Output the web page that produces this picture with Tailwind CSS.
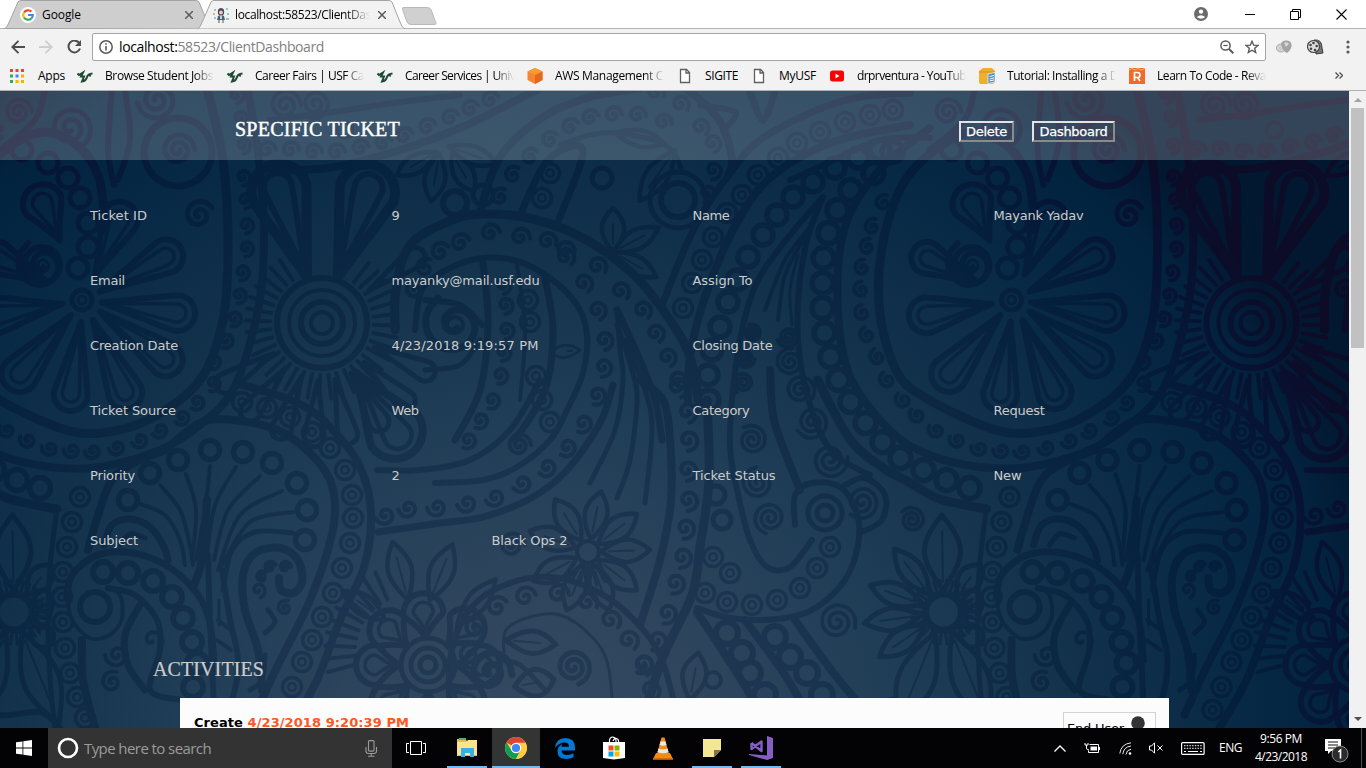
<!DOCTYPE html>
<html lang="en">
<head>
<meta charset="utf-8">
<title>Specific Ticket</title>
<script src="https://cdn.jsdelivr.net/npm/@tailwindcss/browser@4"></script>
</head>
<body class="w-[1366px] h-[768px] overflow-hidden flex flex-col bg-white font-['Open_Sans','Noto_Sans',sans-serif] text-[12px] text-black">

<!-- tab strip -->
<div class="relative h-[28px] shrink-0 flex items-center whitespace-nowrap">
  <svg class="absolute left-0 top-0" width="450" height="29" viewBox="0 0 450 29">
    <path d="M5 28.5C8 26 9 22 11 18L18 2Q19 .5 21 .5H195Q198 .5 199 2L206 19V29Z" fill="#cecece" stroke="#a3a3a3"/>
    <path d="M198 29C201 26 202 22 204 18L211 2Q212 .5 214 .5H388Q391 .5 392 2L400 22Q402 28 405 29Z" fill="#f2f2f2" stroke="#a3a3a3"/>
    <path d="M402.500 9.500Q401.500 7.500 404 7.500H427Q430 7.500 431 9.500L436 23.500Q436 24.500 434 24.500H411Q408 24.500 407 22Z" fill="#d0d0d0" stroke="#b9b9b9"/>
  </svg>
  <div class="relative flex items-center ml-[20px] w-[192px] h-full pt-[2px]">
    <svg width="16" height="16" viewBox="0 0 16 16"><circle cx="8" cy="8" r="8" fill="#fff"/><g fill="none" stroke-width="2.200"><path d="M4 5.500A4.800 4.800 0 0 1 11.400 4.600" stroke="#ea4335"/><path d="M4 5.500A4.800 4.800 0 0 0 4 10.500" stroke="#fbbc05"/><path d="M4 10.500A4.800 4.800 0 0 0 11.300 11.500" stroke="#34a853"/><path d="M8 8H12.800A4.800 4.800 0 0 1 11.300 11.500" stroke="#4285f4"/></g></svg>
    <div class="ml-[6px] w-[143px]"><span data-w="39">Google</span></div>
    <svg width="8" height="8" viewBox="0 0 8 8"><path d="M0 0L8 8M8 0L0 8" stroke="#5a5a5a" stroke-width="1.500"/></svg>
  </div>
  <div class="relative flex items-center w-[190px] h-full pt-[2px]">
    <svg width="18" height="16" viewBox="0 0 18 16"><path d="M6 7Q5 1 9 1Q13 1 12 7L11 8H7Z" fill="#434a5f"/><circle cx="9" cy="5.500" r="1.900" fill="#f0c9b0"/><path d="M6 9Q9 7 12 9L13 13H5Z" fill="#4e6275"/><path d="M8.300 8.500H9.700V12H8.300Z" fill="#fff"/><path d="M7 13V16M11 13V16" stroke="#555"/><g fill="#7fd0d0"><path d="M2 2H4V4H2ZM14 1H16V3H14ZM2 10H4V12H2ZM14 11H17V13H14ZM15 6H17V8H15Z"/></g><path d="M1 6H3V8H1Z" fill="#e7b66a"/></svg>
    <div class="ml-[5px] w-[135px] overflow-hidden [mask-image:linear-gradient(to_right,black_82%,transparent)]"><span data-w="136">localhost:58523/ClientDas</span></div>
    <svg class="ml-[8px]" width="8" height="8" viewBox="0 0 8 8"><path d="M0 0L8 8M8 0L0 8" stroke="#5a5a5a" stroke-width="1.500"/></svg>
  </div>
  <div class="relative ml-auto flex items-center h-full pr-[19px]">
    <svg width="14" height="14" viewBox="0 0 14 14"><circle cx="7" cy="7" r="7" fill="#6b6b6b"/><circle cx="7" cy="4.600" r="2.200" fill="#fff"/><path d="M2.800 10Q7 6.500 11.200 10Q7 13.500 2.800 10" fill="#fff"/></svg>
    <svg class="ml-[37px]" width="10" height="10" viewBox="0 0 10 10"><path d="M0 5.500H10" stroke="#000"/></svg>
    <svg class="ml-[35px]" width="11" height="11" viewBox="0 0 11 11" fill="none" stroke="#000"><path d="M.5 2.500H8.500V10.500H.5ZM2.500 2V.5H10.500V8.500H9"/></svg>
    <svg class="ml-[35px]" width="11" height="11" viewBox="0 0 11 11"><path d="M.5 .5L10.500 10.500M10.500 .5L.5 10.500" stroke="#000" stroke-width="1.100"/></svg>
  </div>
</div>

<!-- toolbar -->
<div class="h-[33px] shrink-0 bg-[#f2f2f2] border-t border-[#b2b2b2] flex items-center pt-[3px]">
  <svg class="ml-[11px]" width="14" height="14" viewBox="0 0 14 14" fill="none" stroke="#4d4d4d" stroke-width="1.900"><path d="M14 7H1.500M7.500 .8L1.300 7L7.500 13.200"/></svg>
  <svg class="ml-[14px]" width="14" height="14" viewBox="0 0 14 14" fill="none" stroke="#cfcfcf" stroke-width="1.900"><path d="M0 7H12.500M6.500 .8L12.700 7L6.500 13.200"/></svg>
  <svg class="ml-[14px]" width="15" height="14" viewBox="0 0 15 14" fill="none" stroke="#4d4d4d" stroke-width="2"><path d="M12.500 3.500A5.900 5.900 0 1 0 13 8.500"/><path d="M14 0V6H8Z" fill="#4d4d4d" stroke="none"/></svg>
  <div class="ml-[10px] w-[1174px] h-[28px] rounded-[2px] border border-[#a5a5a5] bg-white flex items-center text-[14px] whitespace-nowrap">
    <svg class="ml-[6px]" width="14" height="14" viewBox="0 0 14 14"><circle cx="7" cy="7" r="6.200" fill="none" stroke="#5a5a5a" stroke-width="1.500"/><path d="M7 6V10.500M7 3.200V4.800" stroke="#5a5a5a" stroke-width="1.600"/></svg>
    <span class="ml-[6px] text-[#808080]" data-w="205"><span class="text-black">localhost:</span>58523/ClientDashboard</span>
    <svg class="ml-auto" width="14" height="14" viewBox="0 0 14 14" fill="none" stroke="#5a5a5a"><circle cx="5.500" cy="5.500" r="4.600" stroke-width="1.500"/><path d="M9 9L13.300 13.300" stroke-width="2"/><path d="M3.300 5.500H7.700" stroke-width="1.200"/></svg>
    <svg class="ml-[11px] mr-[6px]" width="14" height="14" viewBox="0 0 14 14" fill="none" stroke="#5a5a5a" stroke-width="1.400"><path d="M7 1.300L8.700 5.200L13 5.500L9.700 8.300L10.700 12.500L7 10.200L3.300 12.500L4.300 8.300L1 5.500L5.300 5.200Z"/></svg>
  </div>
  <svg class="ml-[10px]" width="17" height="14" viewBox="0 0 17 14"><ellipse cx="5" cy="8" rx="4.700" ry="4" fill="#d0d0d0" stroke="#b0b0b0"/><path d="M5 4Q6 0 11 .5Q16 1 15.500 6Q15 10 11 13Q7 11 6 7Z" fill="#a3a3a3"/><path d="M8 3Q11 1 13 4L10 7Z" fill="#d8d8d8"/></svg>
  <svg class="ml-[14px]" width="17" height="16" viewBox="0 0 17 16"><path d="M7 1Q15 0 15 9L16 14L9 15Z" fill="#777" stroke="#3b3b3b"/><circle cx="6.500" cy="7.500" r="6" fill="#ddd" stroke="#444" stroke-width="1.200"/><g fill="#444"><circle cx="6.500" cy="4" r="1.300"/><circle cx="3.500" cy="6" r="1.300"/><circle cx="4" cy="9.800" r="1.300"/><circle cx="8" cy="11" r="1.300"/><circle cx="9.700" cy="7" r="1.300"/></g></svg>
  <svg class="ml-[22px]" width="4" height="14" viewBox="0 0 4 14" fill="#5a5a5a"><circle cx="2" cy="2" r="1.600"/><circle cx="2" cy="7" r="1.600"/><circle cx="2" cy="12" r="1.600"/></svg>
</div>

<!-- bookmarks -->
<div class="h-[30px] shrink-0 bg-[#f2f2f2] border-b border-[#b0b0b0] flex items-center whitespace-nowrap pl-[10px]">
  <div class="flex items-center w-[67px]">
    <svg width="14" height="14" viewBox="0 0 14 14"><path d="M0 0H3V3H0ZM5.500 0H8.500V3H5.500ZM11 0H14V3H11Z" fill="#ea4335"/><path d="M0 5.500H3V8.500H0ZM0 11H3V14H0Z" fill="#34a853"/><path d="M5.500 5.500H8.500V8.500H5.500Z" fill="#4285f4"/><path d="M11 5.500H14V8.500H11ZM5.500 11H8.500V14H5.500ZM11 11H14V14H11Z" fill="#fbaf05"/></svg>
    <span class="ml-[14px]" data-w="27">Apps</span>
  </div>
  <div class="flex items-center w-[150px]"><svg width="16" height="16" viewBox="0 0 16 16"><use href="#bull"/></svg><div class="ml-[12px] w-[109px] overflow-hidden [mask-image:linear-gradient(to_right,black_82%,transparent)]"><span data-w="108">Browse Student Jobs</span></div></div>
  <div class="flex items-center w-[150px]"><svg width="16" height="16" viewBox="0 0 16 16"><use href="#bull"/></svg><div class="ml-[12px] w-[109px] overflow-hidden [mask-image:linear-gradient(to_right,black_82%,transparent)]"><span data-w="109">Career Fairs | USF Ca</span></div></div>
  <div class="flex items-center w-[150px]"><svg width="16" height="16" viewBox="0 0 16 16"><use href="#bull"/></svg><div class="ml-[12px] w-[109px] overflow-hidden [mask-image:linear-gradient(to_right,black_82%,transparent)]"><span data-w="110">Career Services | Univ</span></div></div>
  <div class="flex items-center w-[150px]"><svg width="16" height="16" viewBox="0 0 16 16"><path d="M8 0L15.500 3.500V12L8 16L.5 12V3.500Z" fill="#f58536"/><path d="M8 0L15.500 3.500L8 7L.5 3.500Z" fill="#fb9a2d"/><path d="M8 7L15.500 3.500V12L8 16Z" fill="#e9651e"/></svg><div class="ml-[12px] w-[109px] overflow-hidden [mask-image:linear-gradient(to_right,black_82%,transparent)]"><span data-w="108">AWS Management C</span></div></div>
  <div class="flex items-center w-[74px]"><svg width="16" height="16" viewBox="0 0 16 16"><use href="#doc"/></svg><span class="ml-[12px]" data-w="33">SIGITE</span></div>
  <div class="flex items-center w-[78px]"><svg width="16" height="16" viewBox="0 0 16 16"><use href="#doc"/></svg><span class="ml-[12px]" data-w="37">MyUSF</span></div>
  <div class="flex items-center w-[150px]"><svg width="16" height="16" viewBox="0 0 16 16"><rect x="1" y="2.500" width="14" height="11" rx="2.500" fill="#f00"/><path d="M6.500 5.500L10.500 8L6.500 10.500Z" fill="#fff"/></svg><div class="ml-[12px] w-[109px] overflow-hidden [mask-image:linear-gradient(to_right,black_82%,transparent)]"><span data-w="109">drprventura - YouTub</span></div></div>
  <div class="flex items-center w-[150px]"><svg width="17" height="16" viewBox="0 0 17 16"><path d="M0 3L4 0H13L16 3V14L14 16H1L0 14Z" fill="#efae2f"/><path d="M0 4H16" stroke="#d18f1f"/><path d="M9 6L16 4.500V14L9 15.500Z" fill="#3d8fc6" stroke="#fff" stroke-width=".7"/><path d="M10.500 8.500L15 7.500M10.500 11L15 10M10.500 13L15 12" stroke="#fff"/></svg><div class="ml-[11px] w-[109px] overflow-hidden [mask-image:linear-gradient(to_right,black_82%,transparent)]"><span data-w="111">Tutorial: Installing a D</span></div></div>
  <div class="flex items-center w-[150px]"><svg width="16" height="16" viewBox="0 0 16 16"><path d="M0 0H16V16H0Z" fill="#f26a25"/><path d="M5.500 13V4.500H8.500Q11 4.500 11 7T8.500 9.500H5.500M8.500 9.500L11 13" fill="none" stroke="#fff" stroke-width="1.700"/><path d="M0 2L3 .5L6 2L9 .5L12 2L16 .5" fill="none" stroke="#f9b18d"/></svg><div class="ml-[12px] w-[109px] overflow-hidden [mask-image:linear-gradient(to_right,black_82%,transparent)]"><span data-w="109">Learn To Code - Reva</span></div></div>
  <svg class="ml-[56px]" width="8" height="7" viewBox="0 0 8 7" fill="none" stroke="#4d4d4d" stroke-width="1.300"><path d="M.5 .5L3.500 3.500L.5 6.500M4.500 .5L7.500 3.500L4.500 6.500"/></svg>
</div>
<svg width="0" height="0" class="absolute"><defs>
  <g id="bull" fill="none" stroke="#1d4a33" stroke-width="2"><path d="M.5 5.500L2 7L6 4.500L4 8.500H7L5 13.500Q9 13 10 9Q11 6 15.500 5.500"/><path d="M12 7.500L14 8" stroke-width="1.400"/></g>
  <g id="doc"><path d="M3.500 1.500H9.500L12.500 4.500V14.500H3.500ZM9 1.500V5H12.500" fill="#fff" stroke="#5f5f5f" stroke-width="1.300"/></g>
</defs></svg>

<!-- page viewport -->
<div class="h-[637px] shrink-0 flex overflow-hidden">
  <main class="relative w-[1349px] overflow-hidden font-['DejaVu_Sans',Verdana,sans-serif] text-[13px] text-[#cccccc] bg-[#06253f]">
    <svg class="absolute inset-0" width="1349" height="637" viewBox="0 91 1349 637">
      <defs>
        <radialGradient id="base" gradientUnits="userSpaceOnUse" cx="0" cy="0" r="1" gradientTransform="translate(540 760) scale(880 840)">
          <stop offset="0" stop-color="#344b62"/><stop offset=".2" stop-color="#2e455d"/><stop offset=".4" stop-color="#213e57"/><stop offset=".6" stop-color="#13324c"/><stop offset=".78" stop-color="#092a46"/><stop offset=".92" stop-color="#02233f"/><stop offset="1" stop-color="#021730"/>
        </radialGradient>
        <radialGradient id="ink" gradientUnits="userSpaceOnUse" cx="0" cy="0" r="1" gradientTransform="translate(540 760) scale(880 840)">
          <stop offset="0" stop-color="#0a1f3f" stop-opacity=".3"/><stop offset=".6" stop-color="#001735" stop-opacity=".38"/><stop offset=".8" stop-color="#001333" stop-opacity=".45"/><stop offset=".92" stop-color="#0c062a" stop-opacity=".55"/><stop offset="1" stop-color="#140522" stop-opacity=".6"/>
        </radialGradient>
        <g id="tile" fill="none" stroke="#fff" stroke-width="5" stroke-linecap="round" stroke-linejoin="round"></g>
        <mask id="lace" maskUnits="userSpaceOnUse" x="0" y="0" width="1400" height="760"><use href="#tile" x="-929.500"/><use href="#tile"/><use href="#tile" x="929.500"/></mask>
      </defs>
      <rect y="91" width="1349" height="637" fill="url(#base)"/>
      <rect y="91" width="1349" height="637" fill="url(#ink)" mask="url(#lace)"/>
    </svg>
    <div class="relative flex flex-col">
      <header class="h-[69px] bg-white/20 flex items-start text-white">
        <h1 class="ml-[235px] mt-[26px] w-[724px] font-['Liberation_Serif',Georgia,serif] text-[20px] leading-[25px] [-webkit-text-stroke:0.4px_white]"><span data-w="165">SPECIFIC TICKET</span></h1>
        <button class="mt-[30px] w-[55px] h-[21px] border-2 border-t-[#e3e3e3] border-l-[#e3e3e3] border-r-[#8b8b8b] border-b-[#8b8b8b] leading-[17px] [-webkit-text-stroke:0.25px_white]"><span data-w="41">Delete</span></button>
        <button class="ml-[18px] mt-[30px] w-[83px] h-[21px] border-2 border-t-[#e3e3e3] border-l-[#e3e3e3] border-r-[#8b8b8b] border-b-[#8b8b8b] leading-[17px] [-webkit-text-stroke:0.25px_white]"><span data-w="68">Dashboard</span></button>
      </header>
      <div class="grid grid-cols-[301.500px_301px_301px_200px] auto-rows-[65px] ml-[90px] pt-[23px] leading-[65px] whitespace-nowrap">
        <div><span data-w="57">Ticket ID</span></div><div>9</div><div><span data-w="37">Name</span></div><div><span data-w="90">Mayank Yadav</span></div>
        <div><span data-w="35">Email</span></div><div><span data-w="148">mayanky@mail.usf.edu</span></div><div><span data-w="60">Assign To</span></div><div></div>
        <div><span data-w="88">Creation Date</span></div><div><span data-w="147">4/23/2018 9:19:57 PM</span></div><div><span data-w="80">Closing Date</span></div><div></div>
        <div><span data-w="86">Ticket Source</span></div><div><span data-w="27">Web</span></div><div><span data-w="57">Category</span></div><div><span data-w="51">Request</span></div>
        <div><span data-w="45">Priority</span></div><div>2</div><div><span data-w="83">Ticket Status</span></div><div><span data-w="28">New</span></div>
        <div><span data-w="48">Subject</span></div><div class="pl-[100px]"><span data-w="76">Black Ops 2</span></div>
      </div>
      <h2 class="ml-[153px] mt-[84px] h-[49px] font-['Liberation_Serif',Georgia,serif] text-[20px] leading-[25px] [-webkit-text-stroke:0.2px_#cccccc]"><span data-w="111">ACTIVITIES</span></h2>
      <section class="-mt-[8px] ml-[180px] w-[989px] h-[60px] bg-[#fcfcfc] flex justify-between text-black whitespace-nowrap">
        <div class="ml-[14px] mt-[16px] leading-[18px] font-bold"><span data-w="215">Create <span class="text-[#ff5722]">4/23/2018 9:20:39 PM</span></span></div>
        <div class="mt-[14px] mr-[13px] w-[93px] h-[60px] border border-[#d3d3d3] flex items-start pl-[3px]">
          <div class="mt-[7px] w-[64px] leading-[18px]"><span data-w="57">End User</span></div>
          <svg class="mt-[3px]" width="14" height="20" viewBox="0 0 14 20"><circle cx="7" cy="7" r="6.800" fill="#333"/></svg>
        </div>
      </section>
    </div>
  </main>
  <aside class="w-[17px] bg-[#f1f1f1] flex flex-col items-center">
    <svg class="mt-[7px]" width="8" height="4" viewBox="0 0 8 4"><path d="M0 4L4 0L8 4Z" fill="#a3a3a3"/></svg>
    <div class="mt-[6px] w-[13px] h-[240px] bg-[#c1c1c1]"></div>
    <svg class="mt-auto mb-[7px]" width="8" height="4" viewBox="0 0 8 4"><path d="M0 0L4 4L8 0Z" fill="#505050"/></svg>
  </aside>
</div>

<!-- taskbar -->
<div class="relative h-[40px] shrink-0 bg-[#030204] flex items-stretch text-white whitespace-nowrap">
  <div class="w-[48px] flex items-center justify-center"><svg width="16" height="16" viewBox="0 0 16 16" fill="#fff"><path d="M0 2.300L6.500 1.400V7.500H0ZM7.300 1.300L16 0V7.500H7.300ZM0 8.400H6.500V14.600L0 13.700ZM7.300 8.400H16V16L7.300 14.800Z"/></svg></div>
  <div class="w-[344px] bg-[#333333] flex items-center pl-[9px]">
    <svg width="22" height="22" viewBox="0 0 22 22"><circle cx="11" cy="11" r="9" fill="none" stroke="#fff" stroke-width="2.700"/></svg>
    <span class="ml-[5px] text-[15px] text-[#9b9b9b]" data-w="127">Type here to search</span>
    <svg class="ml-auto mr-[14px]" width="13" height="17" viewBox="0 0 13 17" fill="none" stroke="#9b9b9b" stroke-width="1.100"><rect x="3.500" y=".6" width="5.500" height="10.500" rx="1"/><path d="M1 7V11Q1 13.500 3.500 13.500H9Q11.500 13.500 11.500 11V7M6.200 13.500V16M3 16.300H9.500"/></svg>
  </div>
  <div class="w-[48px] flex items-center justify-center"><svg width="20" height="14" viewBox="0 0 20 14" fill="none" stroke="#fff"><path d="M4.500 .5H15.500V13.500H4.500ZM3 2.500H.5V11.500H3M17 2.500H19.500V11.500H17"/></svg></div>
  <div class="w-[52px] flex flex-col items-center pl-[2px]"><svg class="mt-[9px]" width="22" height="20" viewBox="0 0 22 20"><path d="M1 2H9L11 4H21V19H1Z" fill="#e9bd54"/><path d="M1 5H10L12 3H21V18H1Z" fill="#fbe38f"/><path d="M3 1H10V3H3Z" fill="#4fb463"/><path d="M5 20V11H18V20H14V16H9V20Z" fill="#36b0e6"/></svg><div class="mt-auto w-[40px] h-[2px] bg-[#76b9ed]"></div></div>
  <div class="w-[48px] bg-[#333434] flex flex-col items-center"><svg class="mt-[9px]" width="22" height="22" viewBox="0 0 22 22"><circle cx="11" cy="11" r="11" fill="#fc4"/><path d="M11 11L1.500 5.500A11 11 0 0 1 20.500 5.500Z" fill="#db4437"/><path d="M1.500 5.500A11 11 0 0 0 11 22L15.500 13.500L6.500 13.500Z" fill="#0f9d58"/><path d="M11 5.800H20.600A11 11 0 0 1 11 22L15.500 13.500Z" fill="#ffcd40"/><circle cx="11" cy="11" r="5.200" fill="#fff"/><circle cx="11" cy="11" r="4.100" fill="#4285f4"/></svg><div class="mt-auto w-[48px] h-[2px] bg-[#76b9ed]"></div></div>
  <div class="w-[50px] flex items-center justify-center"><svg width="20" height="21" viewBox="0 0 20 21"><path d="M0 10Q1 0 10.500 0Q20 0 20 10V12.500H6.500Q7 17 12 17Q16 17 18.500 15.200V19.300Q15 21 11 21Q2.500 21 2.500 13Q2.500 8.500 7.500 6Q6.500 7.500 6.500 8.800H14Q14 4.500 9.500 4.500Q4 4.500 0 10Z" fill="#0078d7"/></svg></div>
  <div class="w-[48px] flex items-center justify-center"><svg width="24" height="24" viewBox="0 0 24 24"><path d="M7.500 7V4Q8 1 10.500 1Q13.500 1 14 4V7M11 5Q12 2 14.500 2.500Q17 3 16.500 7" fill="none" stroke="#fff" stroke-width="1.200"/><path d="M1 6H23V22L12 23.500L1 22Z" fill="#fff"/><path d="M6.500 9.500H11.500V14.500H6.500Z" fill="#f25022"/><path d="M12.500 9.500H17.500V14.500H12.500Z" fill="#7fba00"/><path d="M6.500 15.500H11.500V20.500H6.500Z" fill="#00a4ef"/><path d="M12.500 15.500H17.500V20.500H12.500Z" fill="#ffb900"/></svg></div>
  <div class="w-[50px] flex items-center justify-center"><svg width="20" height="23" viewBox="0 0 20 23"><path d="M3 16H17L20 22H0Z" fill="#f08a12"/><path d="M0 21H20V22.800H0Z" fill="#d36b0b"/><path d="M8.500 .5H11.500L16 17Q10 20 4 17Z" fill="#f58b1c"/><path d="M7.500 4.500H12.500L13.500 8Q10 9.500 6.500 8ZM5.500 11.500Q10 13.500 14.500 11.500L15.500 15Q10 17.500 4.500 15Z" fill="#e8e8e8"/></svg></div>
  <div class="w-[48px] flex flex-col items-center"><svg class="mt-[11px]" width="18" height="18" viewBox="0 0 18 18"><path d="M0 0H18V11L11 18H0Z" fill="#f3e694"/><path d="M18 11H11V18Z" fill="#7b754a"/></svg><div class="mt-auto w-[40px] h-[2px] bg-[#76b9ed]"></div></div>
  <div class="w-[50px] flex flex-col items-center"><svg class="mt-[8px]" width="24" height="24" viewBox="0 0 24 24"><path d="M18 0L24 2V22L18 24L0 19V18L18 19.500Z" fill="#865fc5"/><path d="M2.500 7V13L12.500 5.500V15L2.500 7" fill="none" stroke="#865fc5" stroke-width="2.400" stroke-linejoin="round"/></svg><div class="mt-auto w-[40px] h-[2px] bg-[#76b9ed]"></div></div>
  <div class="ml-auto flex items-center pr-[17px]">
    <svg width="12" height="7" viewBox="0 0 12 7" fill="none" stroke="#fff" stroke-width="1.300"><path d="M.5 6.500L6 1L11.500 6.500"/></svg>
    <svg class="ml-[18px]" width="16" height="12" viewBox="0 0 16 12"><path d="M1 1V3H4V1M2.500 3V6Q2.500 8 5 8" fill="none" stroke="#fff"/><path d="M5.500 2.500H14.500V10.500H4.500V8.500M15.500 5V8" fill="none" stroke="#fff"/><path d="M6.500 4.500H13V8.500H6.500Z" fill="#fff"/></svg>
    <svg class="ml-[19px]" width="13" height="13" viewBox="0 0 13 13" fill="none" stroke="#e8e8e8"><path d="M.8 11.500Q2 2 12 .8M3.800 12.200Q4.500 5 12 4M7 12.500Q7.500 8 12 7.200" /><circle cx="11" cy="11.500" r="1.300" fill="#fff" stroke="none"/></svg>
    <svg class="ml-[17px]" width="15" height="12" viewBox="0 0 15 12" fill="none" stroke="#fff"><path d="M.5 4H2.500L5.500 .8V11.200L2.500 8H.5ZM8.500 3.500L13.500 8.500M13.500 3.500L8.500 8.500"/></svg>
    <svg class="ml-[17px]" width="24" height="13" viewBox="0 0 24 13"><rect x=".6" y=".6" width="22.500" height="11.800" rx="1" fill="none" stroke="#fff" stroke-width="1.200"/><path d="M3 3.700H21M3 6.300H21" stroke="#fff" stroke-dasharray="1.500 1.200"/><path d="M3 9.500H5M7 9.500H17M19 9.500H21" stroke="#fff"/></svg>
    <div class="ml-[14px] w-[23px]"><span data-w="23">ENG</span></div>
    <div class="ml-[12px] w-[54px] flex flex-col items-center leading-[18px]"><span data-w="42">9:56 PM</span><span data-w="52">4/23/2018</span></div>
    <svg class="ml-[16px] mt-[4px]" width="25" height="25" viewBox="0 0 25 25"><path d="M1 1H17V13H7L4 16V13H1Z" fill="#fff"/><path d="M4 4H14M4 7H14M4 10H11" stroke="#111"/><circle cx="16" cy="16" r="8" fill="#2b2b2b" stroke="#8b8b8b"/><path d="M14.300 14L16.500 12V20.500" fill="none" stroke="#fff" stroke-width="1.600"/></svg>
  </div>
  <div class="absolute right-[4px] top-0 w-px h-full bg-[#4d4d4d]"></div>
</div>

<script>
// ---- paisley backdrop ----
const tile = document.getElementById('tile'), NS = 'http://www.w3.org/2000/svg';
const pts = s => s.trim().split(/\s+/).map(p => p.split(',').map(Number));
function add(tag, a) { const e = document.createElementNS(NS, tag); for (const k in a) e.setAttribute(k, a[k]); tile.appendChild(e); return e; }
function smooth(p) {
  let d = 'M' + p[0];
  for (let i = 0; i < p.length - 1; i++) {
    const a = p[i - 1] || p[i], b = p[i], c = p[i + 1], e = p[i + 2] || c;
    d += 'C' + [b[0] + (c[0] - a[0]) / 6, b[1] + (c[1] - a[1]) / 6, c[0] - (e[0] - b[0]) / 6, c[1] - (e[1] - b[1]) / 6, c[0], c[1]].map(v => v.toFixed(1)).join(' ');
  }
  return d;
}
const line = (s, w = 7) => add('path', { d: smooth(pts(s)), 'stroke-width': w });
const ring = (x, y, r, w = 4.5) => add('circle', { cx: x, cy: y, r, 'stroke-width': w });
const rings = (s, r = 9.5, w = 5) => pts(s).forEach(p => ring(p[0], p[1], r, w));
const targets = s => pts(s).forEach(p => { ring(p[0], p[1], 9.5, 3.5); ring(p[0], p[1], 3.8, 2.5); });
function spiral(x, y, r, turns = 2, start = 0, w = 3.6, dir = 1) {
  const p = [], n = Math.ceil(turns * 12);
  for (let i = 0; i <= n; i++) { const t = i / n, a = start + dir * t * turns * 2 * Math.PI; p.push([x + Math.cos(a) * r * (.12 + .88 * t), y + Math.sin(a) * r * (.12 + .88 * t)]); }
  add('path', { d: smooth(p), 'stroke-width': w });
}
function curls(s, r = 9.5, dir = 1) {
  const p = pts(s);
  p.forEach((c, i) => { const n = p[i + 1] || c, b = p[i - 1] || c; spiral(c[0], c[1], r, 1.35, Math.atan2(n[1] - b[1], n[0] - b[0]) - dir * .7 * Math.PI, 4.2, dir); });
}
// teardrop petal from (x,y), pointing at deg, rounded tip
function petal(x, y, deg, from, to, wd, w = 6, inner = true) {
  const T = `translate(${x} ${y}) rotate(${deg})`, f = (a, b, h) => `M${a} 0C${a + (b - a) * .4} ${-h * .5} ${b - h * 1.2} ${-h} ${b - h} ${-h}A${h} ${h} 0 0 1 ${b - h} ${h}C${b - h * 1.2} ${h} ${a + (b - a) * .4} ${h * .5} ${a} 0`;
  add('path', { d: f(from, to, wd), transform: T, 'stroke-width': w });
  if (inner) add('path', { d: f(from + 8, to - 9, wd * .5), transform: T, 'stroke-width': w * .6 });
}
// pointed leaf
function leaf(x, y, deg, from, to, wd, w = 4.5) {
  const m = (from + to) / 2, T = `translate(${x} ${y}) rotate(${deg})`;
  add('path', { d: `M${from} 0C${m - 4} ${-wd} ${m + 8} ${-wd} ${to} 0C${m + 8} ${wd} ${m - 4} ${wd} ${from} 0`, transform: T, 'stroke-width': w });
  add('path', { d: `M${from + 8} 0H${to - 16}`, transform: T, 'stroke-width': 2 });
}
function rays(x, y, a, b, r1, r2, step, w = 3) { for (let t = a; t <= b; t += step) { const r = t * Math.PI / 180; add('path', { d: `M${x + Math.cos(r) * r1} ${y + Math.sin(r) * r1}L${x + Math.cos(r) * r2} ${y + Math.sin(r) * r2}`, 'stroke-width': w }); } }

// great medallion on the left with its scroll belt
line('205,80 223,160 228,245 223,320 200,380 150,419 100,433 60,428 0,400 -32,373 -50,310 -46,240 -22,177 30,135 70,140 98,175 105,230', 9);
line('246,80 259,160 264,240 258,310 234,388 200,425 160,450 100,467 50,467 0,455 -40,430 -80,375 -92,300 -84,225 -50,170 0,128', 8);
curls('236,95 240,118 243,145 243,177 245,200 246,225 246,248 242,272 239,295 234,318 226,340 213,361 213,383 197,402 182,417 160,430 140,440 117,447 93,451 72,450 50,448 28,440 7,430 -12,415 -26,400 -42,380 -52,357 -62,335 -67,313 -68,290 -67,268 -62,247 -57,227 -46,203', 8.5);
rings('-37,152 -56,173 -79,190 -92,210 -101,233 -106,258 -107,283 -107,308 -105,333 -99,357 -91,380 -79,402 -64,423 -47,442 -29,458 -6,470 17,480 40,488', 10.5, 5.5);
line('-112,380 -79,440 -46,468 -19,483 10,499 57,509', 9);
// flower inside the medallion
ring(42, 265, 18, 6); spiral(42, 265, 26, 1.5, 1, 6); spiral(42, 265, 9, 1.5, 0, 3);
rings('22,150 48,163 68,178 80,198 88,223 88,247 78,268', 10, 5);
petal(84, 300, -66, 28, 106, 18, 6); petal(84, 300, -28, 18, 110, 17, 6); petal(84, 300, 8, 18, 112, 18, 6); petal(84, 300, 36, 20, 118, 17, 6); petal(84, 300, 66, 22, 118, 17, 6); petal(84, 300, 98, 22, 112, 17, 6); petal(84, 300, 131, 20, 116, 18, 6); petal(84, 300, 170, 22, 106, 18, 6); petal(84, 300, 206, 40, 112, 16, 6);
petal(62, 245, 245, 5, 65, 20, 6);
rings('82,300', 10, 5); rings('82,300', 4, 3);
spiral(199, 215, 15, 1.6, 2, 5); spiral(178, 150, 17, 2, 0, 5); ring(178, 152, 34, 7);
spiral(157, 100, 20, 2, 3, 5); spiral(70, 128, 22, 2, 1, 5); spiral(18, 112, 14, 2, 0, 4);
line('125,90 130,140 118,180', 6); line('112,90 108,150 114,185', 6); line('45,90 35,120 0,150', 6);
// tall flower
[11, 21, 33, 45].forEach((r, i) => ring(322, 323, r, i == 1 || i == 3 ? 6 : 4));
petal(322, 323, -108, 48, 166, 28, 10); petal(322, 323, -71, 48, 166, 28, 10);
rays(322, 323, -52, 240, 52, 76, 9, 4);
[-35, 25, 43, 60, 77, 94, 111, 129, 148].forEach(a => petal(322, 323, a, 58, 124, 10, 5, false));
petal(322, 323, 56, 60, 158, 28, 8);
// top scroll bands
line('262,168 300,170 340,166 400,150 460,128 517,100 540,88', 8); line('270,120 333,112 400,102 460,95', 6);
curls('267,150 290,150 313,152 336,152 360,148 383,143 404,136 427,127 450,118 470,109 490,100', 9);
spiral(285, 105, 16, 2, 0, 4); spiral(315, 104, 15, 2, 2, 4); ring(345, 130, 8, 3);
leaf(440, 150, 100, 4, 52, 14); leaf(450, 150, 60, 4, 48, 13); leaf(445, 145, 20, 4, 55, 12); leaf(440, 150, 150, 4, 50, 12); ring(455, 203, 12, 6); ring(483, 195, 10, 5);
line('480,212 500,157 543,117 590,97 640,88', 8); line('520,215 548,160 583,150 558,222', 7); line('683,86 717,117 732,157 728,176', 8);
line('560,145 590,135 617,133 657,141 675,155 682,172', 5);
curls('500,197 513,175 530,157 550,140 570,127 590,118 613,115 637,115 663,122', 9); curls('655,92 680,104 700,127 712,143 713,170 707,193', 9.5);
targets('542,198 550,173'); ring(602, 178, 10, 5); ring(678, 200, 17, 6); ring(678, 200, 28, 5);
leaf(675, 150, 125, 0, 62, 15); leaf(615, 133, 12, 0, 50, 11); leaf(613, 252, -90, 0, 44, 15); leaf(613, 252, -28, 0, 52, 13); leaf(613, 252, 30, 0, 50, 12);
line('700,105 735,112 726,128', 6); line('750,92 763,120 775,92', 7);
// twin bead arches
line('910,93 860,97 817,110 760,140 727,177 697,223 677,267 663,303', 7); line('910,125 833,142 770,178 733,230 703,303 690,357 688,400', 8);
line('930,138 880,140 823,165 790,180', 6);
targets('893,110 870,115 845,122 820,132 797,143 778,158 758,175 742,195 727,213 713,237 702,260 692,283 683,308');
rings('880,150 858,158 835,168 813,182 793,197 777,215 763,235 748,257 737,280 728,302 720,327 712,350 708,375 709,400', 10, 5.5);
line('823,197 790,235 758,280 742,330 733,390 730,447 737,490 750,540 767,567 790,567 812,540', 6); line('823,197 807,240 798,300 800,360 815,420 835,455 870,475', 6);
line('812,225 785,260 765,310', 4); line('803,240 785,275 778,320', 4); line('798,255 790,290 792,325', 3);
line('770,370 773,415 783,447 800,490', 8);
[[752, 333, 9], [788, 337, 11], [745, 358, 10], [790, 362, 14], [743, 383, 11], [800, 390, 15], [752, 440, 15], [812, 422, 17], [830, 460, 18], [758, 483, 16], [770, 518, 16], [837, 622, 19], [912, 520, 13], [862, 502, 17]].forEach((s, i) => spiral(s[0], s[1], s[2], 2.3, i, 3.8, i % 2 ? 1 : -1));
[8, 17].forEach(r => ring(825, 513, r, 5)); line('795,525 795,495 812,483 840,487 857,513 858,545 845,580 817,607 790,617 757,620 725,617 697,608', 6);
line('845,485 865,478 885,495 882,520 862,532', 6);
targets('830,547 817,568 800,588 777,600 752,605 727,602 705,593 730,573 713,557'); rings('722,520 716,495', 9, 5);
rings('727,633 742,653 750,673 765,695 775,637 790,657 807,673 822,695 838,715', 11, 6);
line('697,612 735,670 770,728', 8); line('745,620 785,675 815,728', 8); line('795,620 835,675 880,728', 8);
// central vertical scroll belt
line('640,380 663,400 670,440 671,500 660,560 640,625', 8); line('707,400 709,480 700,547 692,595 663,657 640,728', 9);
curls('677,387 687,412 688,440 687,470 688,500 685,528 682,557 675,583 667,613 657,640 643,663', 11);
// centre paisley
line('395,330 396,290 410,245 450,221 483,214 533,219 583,238 633,274 668,317 690,357 700,410', 9);
line('415,330 422,290 450,268 483,258 517,261 550,278 577,305 587,335 583,373 567,410 550,440 517,467 483,480 435,483', 6);
line('613,385 600,423 567,470 533,497 483,517 440,523 378,532', 7); line('377,470 420,470 470,460 510,430 540,380', 6);
curls('415,290 425,268 440,252 460,243 490,233 520,237 547,241 565,257 583,283 597,310 604,340 603,367 597,395 583,423 567,447 547,467 522,483 495,497 467,503 437,507 408,508 385,515', 10);
curls('565,250 597,266 620,291 642,310 655,333 667,357 677,380', 10);
line('483,263 488,323 480,390 455,440', 7); line('545,278 553,330 545,390 515,440', 7); line('517,265 525,330 520,400', 4);
curls('503,285 505,305 506,330 503,352 500,375 492,400 480,420 468,440', 9); targets('528,300 530,322 536,376 542,400 550,422'); spiral(519, 445, 12, 2, 0, 4);
leaf(580, 350, 175, 0, 28, 8, 3); spiral(455, 325, 32, 1.5, 1, 7); ring(455, 325, 8, 4); line('425,300 460,305 482,325', 6); line('425,370 460,365 480,340', 5);
line('617,310 640,360 655,400 662,440', 7); line('617,310 620,350 623,380 615,430 590,483', 5); line('617,325 632,370 637,400 630,460 617,498', 5); line('625,340 645,390 652,430 645,503', 5);
// eight-leaf blossom
ring(588, 552, 11, 4); [-78, -38, -2, 38, 70, 110, 152, 200, 238].forEach(a => leaf(588, 552, a, 13, 62, 15));
rays(588, 552, 60, 120, 14, 34, 15, 3); spiral(512, 545, 13, 2, 0, 4);
// lower centre medallion
line('450,728 450,660 467,613 500,587 550,577 600,593 637,623 662,660 680,728', 6); curls('470,655 475,628 497,607 525,597 558,594 587,602 610,620 628,640 643,665 650,690', 11);
line('504,652 506,630 530,617 560,615 590,635 608,665 614,728', 3); leaf(506, 640, 5, 0, 50, 15, 5); line('500,660 520,665 545,690', 5);
spiral(490, 672, 22, 1.7, 2, 7); spiral(573, 667, 18, 2.2, 0, 5); leaf(495, 690, -10, 20, 60, 18, 5); leaf(470, 610, -50, -20, 40, 13);
leaf(690, 700, -80, 0, 48, 16); ring(713, 680, 8, 4);
// lower scalloped flower
[8, 17, 27].forEach(r => ring(428, 665, r, 5)); [-95, -45, 0, 45, 90, 135, 180, 222].forEach(a => petal(428, 665, a, 28, 72, 20, 6));
leaf(408, 600, -105, 0, 60, 16); leaf(430, 600, -68, 0, 60, 16); leaf(385, 620, -145, 0, 50, 13); rays(410, 650, 165, 250, 55, 85, 9, 4);
// fan paisley
line('240,384 300,404 333,430 360,467 371,513 364,567 340,620 317,680 290,728', 8); line('165,450 200,423 233,420 277,430 310,453 330,480 335,513 327,553 307,607 277,667 255,715', 8);
targets('242,402 267,408 290,417 312,432 330,448 345,470 352,495 353,518 350,543 342,568 333,593 322,617 312,640 302,662 292,687 283,710');
line('57,507 50,567 48,620 50,680 55,728', 5); line('165,450 130,465 110,483 95,525 88,550', 8); line('82,640 83,680 95,728', 8);
targets('80,497 72,522 67,547 63,572 62,597 63,622 65,648 70,673 77,697 85,718');
rings('128,500 150,473 178,460 210,450 243,452 272,463 297,483 307,510 305,540', 9.5, 5.5);
line('140,504 165,515 180,540 185,565', 4); line('160,485 180,510 190,545 193,565', 4); line('186,474 196,510 192,560', 4); line('210,466 205,510 196,560', 4);
line('236,467 215,505 207,555', 4); line('260,476 228,510 214,560', 4); line('282,491 240,515 218,570', 4); line('293,512 250,522 222,565', 4); line('293,533 255,532 232,550 223,590', 5);
line('207,500 202,560 194,585', 8); line('208,555 210,620 215,728', 6); line('222,570 230,620 238,660 232,700 215,728', 6);
line('262,690 258,650 245,610 243,575 255,553 280,548 298,560 302,582 293,593 281,590 279,578', 8);
curls('262,577 270,567 285,567', 6); spiral(258, 590, 8, 1.2); spiral(285, 608, 8, 1.5, 2); line('268,610 275,622 265,633', 5); line('265,655 262,680 250,690', 5);
rays(219, 600, 90, 90, 0, 25, 9, 3); line('218,620 228,628', 4); line('217,640 231,650', 4);
ring(95, 607, 15, 6); line('67,597 72,575 95,556 125,552 160,562 190,585 208,615 214,660', 7); line('67,597 72,620 90,638 110,635 122,618 120,595 108,588', 4);
rings('103,572 128,573 153,581 172,597 183,618 192,642 197,663 193,687', 10, 6);
line('108,588 135,595 157,620 160,650 150,690 180,700', 6); line('140,605 125,635 128,665 145,690', 7); spiral(152, 640, 12, 1, 1, 4);
line('104,545 112,525 130,519 150,527 163,545 168,560', 7); line('120,545 130,534 145,538', 5); spiral(117, 655, 12, 1.5, 0, 4); spiral(112, 682, 11, 1.5, 2, 4);
// daisy at the tile seam
ring(14, 612, 18, 7); [-91, -52, -20, 8, 40, 68, 112, 145, 172, 200, 232].forEach((a, i) => leaf(14, 612, a, 22, [97, 60, 40, 36, 50, 120, 120, 78, 80, 78, 80][i], i == 0 || i == 5 || i == 6 ? 24 : 15, 5)); rays(14, 612, 0, 350, 20, 32, 12, 3);
line('-60,735 -40,700 0,715 40,712 60,728', 6);

function fit() {
  document.querySelectorAll('[data-w]').forEach(el => {
    el.style.letterSpacing = '0px';
    const r = document.createRange(); r.selectNodeContents(el);
    const n = el.textContent.length;
    let ls = 0;
    for (let k = 0; k < 3; k++) {
      ls += (el.dataset.w - r.getBoundingClientRect().width) / n;
      el.style.letterSpacing = ls.toFixed(3) + 'px';
    }
  });
}
fit();
addEventListener('load', () => { fit(); requestAnimationFrame(fit); setTimeout(fit, 60); });
if (document.fonts) document.fonts.ready.then(fit);
</script>
</body>
</html>
